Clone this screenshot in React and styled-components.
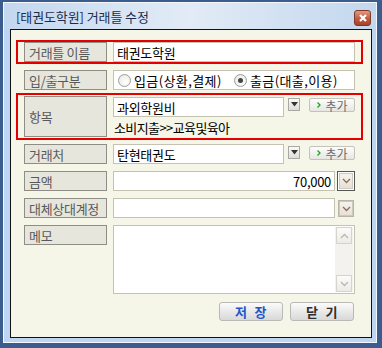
import React from 'react';
import styled, { createGlobalStyle } from 'styled-components';

const Global = createGlobalStyle`
  html, body { margin: 0; padding: 0; background: #fff; }
  body { font-family: "Noto Sans CJK KR", "Liberation Sans", sans-serif; font-size: 13px; }
  * { box-sizing: border-box; }
`;

const Outer = styled.div`
  width: 382px;
  height: 348px;
  background: #3b5c8c;
  padding: 2px 5px 5px 3px;
  display: flex;
`;

const Frame = styled.div`
  flex: 1;
  display: flex;
  flex-direction: column;
  border: 1px solid #f4f8fd;
  background: #bdd4f2;
`;

const TitleBar = styled.div`
  height: 26px;
  display: flex;
  align-items: flex-start;
  justify-content: space-between;
  padding: 0 5px 0 12px;
  background: linear-gradient(90deg, #c3d7ef 0%, #d6e4f4 30%, #e2ebf6 50%, #d2e1f2 75%, #c3d7ef 100%);
`;

const Title = styled.div`
  margin-top: 4px;
  font-size: 13px;
  color: #1c2c4c;
  letter-spacing: -0.1px;
`;

const CloseBtn = styled.div`
  margin-top: 7px;
  width: 17px;
  height: 16px;
  border: 1px solid #7d3a27;
  border-radius: 3px;
  background: linear-gradient(#e29a82, #c35a3e 55%, #a8412a);
  display: flex;
  align-items: center;
  justify-content: center;
`;

const Panel = styled.div`
  flex: 1;
  margin: 0 4px 4px 6px;
  border: 1px solid #111;
  background: #f5f6e8;
  padding: 10px 0 0 5px;
  display: flex;
  flex-direction: column;
`;

const RedBox = styled.div`
  width: 347px;
  margin-top: ${p => p.$mt || 0}px;
  border: 2px solid #e50000;
  padding: ${p => p.$pv || 0}px 6px;
  display: grid;
  grid-template-columns: 83px 242px;
  column-gap: 6px;
`;

const Row = styled.div`
  width: 347px;
  margin-top: ${p => p.$mt || 0}px;
  padding: 0 8px;
  display: grid;
  grid-template-columns: 83px 242px;
  column-gap: 6px;
  align-items: start;
`;

const Label = styled.div`
  height: ${p => p.$h || 20}px;
  border: 1px solid #8e8e86;
  background: #e6e6dd;
  color: #595959;
  padding-left: 4px;
  display: flex;
  align-items: center;
  letter-spacing: -0.3px;
  white-space: nowrap;
`;

const Field = styled.div`
  display: flex;
  align-items: flex-start;
`;

const Input = styled.div`
  width: ${p => p.$w || 242}px;
  height: ${p => p.$h || 20}px;
  margin-top: ${p => p.$mt || 0}px;
  border: 1px solid #c6c2b2;
  background: #fff;
  color: #000;
  padding: 0 3px;
  display: flex;
  align-items: center;
  justify-content: ${p => (p.$right ? 'flex-end' : 'flex-start')};
  letter-spacing: -0.3px;
`;

const Stack = styled.div`
  display: flex;
  flex-direction: column;
`;

const SubText = styled.div`
  margin-top: 3px;
  padding-left: 1px;
  color: #000;
  letter-spacing: -0.6px;
  line-height: 16px;
  white-space: nowrap;
`;

const DropBtn = styled.div`
  width: 12px;
  height: 13px;
  margin: 2px 0 0 4px;
  border: 1px solid #a9a9a4;
  background: linear-gradient(#fafafa, #dcdcd8);
  display: flex;
  align-items: center;
  justify-content: center;
`;

const AddBtn = styled.div`
  width: 46px;
  height: 14px;
  margin: 2px 0 0 9px;
  border: 1px solid #c3c3be;
  border-radius: 2px;
  background: linear-gradient(#fdfdfd, #e6e6e2);
  display: flex;
  align-items: center;
  justify-content: center;
  gap: 5px;
  font-size: 12px;
  color: #6a6a6a;
`;

const ChevBtn = styled.div`
  width: ${p => (p.$focus ? 18 : 16)}px;
  height: ${p => (p.$focus ? 20 : 17)}px;
  margin-top: ${p => (p.$focus ? 0 : 2)}px;
  margin-left: ${p => (p.$focus ? 2 : 3)}px;
  border: 1px solid ${p => (p.$focus ? '#555' : '#b8b4a8')};
  padding: ${p => (p.$focus ? 1 : 0)}px;
  background: #fff;
  display: flex;
`;

const ChevInner = styled.div`
  flex: 1;
  border: 1px solid #cfc9bd;
  background: linear-gradient(#f6f3ee, #e6e0d6);
  display: flex;
  align-items: center;
  justify-content: center;
`;

const RadioBox = styled.div`
  width: 242px;
  height: 20px;
  border: 1px solid #c6c2b2;
  background: #fff;
  padding-left: 4px;
  display: flex;
  align-items: center;
  letter-spacing: 0.4px;
  white-space: nowrap;
`;

const RadioItem = styled.div`
  display: flex;
  align-items: center;
  gap: 3px;
  width: ${p => p.$w || 'auto'};
`;

const Circle = styled.div`
  width: 13px;
  height: 13px;
  flex: none;
  border-radius: 50%;
  border: 1px solid #9c9c98;
  background: radial-gradient(circle at 60% 65%, #ffffff 0%, #e4e4e0 100%);
  display: flex;
  align-items: center;
  justify-content: center;
  &::after {
    content: '';
    display: ${p => (p.$on ? 'block' : 'none')};
    width: 5px;
    height: 5px;
    border-radius: 50%;
    background: #444;
  }
`;

const Memo = styled.div`
  width: 242px;
  height: 69px;
  border: 1px solid #c6c2b2;
  background: #fff;
  display: flex;
  justify-content: flex-end;
  padding: 1px 1px 1px 0;
`;

const ScrollBar = styled.div`
  width: 18px;
  display: flex;
  flex-direction: column;
  justify-content: space-between;
  background: #f3f2ee;
  padding: 0 1px;
`;

const ScrollArrow = styled.div`
  height: 17px;
  border: 1px solid #d6d3cb;
  background: linear-gradient(#fbfbf9, #ecebe6);
  display: flex;
  align-items: center;
  justify-content: center;
`;

const ButtonRow = styled.div`
  width: 347px;
  margin-top: 8px;
  padding-right: 9px;
  display: flex;
  justify-content: flex-end;
  gap: 7px;
`;

const Button = styled.div`
  width: 64px;
  height: 19px;
  border: 1px solid #b9b9b5;
  border-radius: 3px;
  background: linear-gradient(#fbfbfb, #e9e9e9 50%, #d9d9d9);
  color: ${p => (p.$primary ? '#1f55c8' : '#2e2e2e')};
  font-weight: bold;
  font-size: 13px;
  display: flex;
  align-items: center;
  justify-content: center;
  white-space: pre;
  letter-spacing: 0.5px;
`;

const Chevron = ({ up, color = '#8b6d55' }) => (
  <svg width="9" height="6" viewBox="0 0 9 6">
    <polyline
      points={up ? '1,5 4.5,1.5 8,5' : '1,1 4.5,4.5 8,1'}
      fill="none"
      stroke={color}
      strokeWidth="1.3"
    />
  </svg>
);

const Tri = () => (
  <svg width="7" height="5" viewBox="0 0 7 5">
    <polygon points="0,0 7,0 3.5,4.5" fill="#333" />
  </svg>
);

const GreenArrow = () => (
  <svg width="4" height="6" viewBox="0 0 4 6">
    <polyline points="0.5,0.5 3,3 0.5,5.5" fill="none" stroke="#22a020" strokeWidth="1.3" />
  </svg>
);

export default function App() {
  return (
    <>
      <Global />
      <Outer>
        <Frame>
          <TitleBar>
            <Title>[태권도학원] 거래틀 수정</Title>
            <CloseBtn>
              <svg width="8" height="8" viewBox="0 0 8 8">
                <path d="M1 1 L7 7 M7 1 L1 7" stroke="#fff" strokeWidth="2.2" />
              </svg>
            </CloseBtn>
          </TitleBar>
          <Panel>
            <RedBox>
              <Label>거래틀 이름</Label>
              <Input>태권도학원</Input>
            </RedBox>

            <Row $mt={6}>
              <Label>입/출구분</Label>
              <RadioBox>
                <RadioItem $w="116px">
                  <Circle />
                  <span>입금(상환,결제)</span>
                </RadioItem>
                <RadioItem>
                  <Circle $on />
                  <span>출금(대출,이용)</span>
                </RadioItem>
              </RadioBox>
            </Row>

            <RedBox $mt={3} $pv={1}>
              <Label $h={41}>항목</Label>
              <Stack>
                <Field>
                  <Input $w={172} $mt={1}>과외학원비</Input>
                  <DropBtn><Tri /></DropBtn>
                  <AddBtn><GreenArrow />추가</AddBtn>
                </Field>
                <SubText>소비지출&gt;&gt;교육및육아</SubText>
              </Stack>
            </RedBox>

            <Row $mt={4}>
              <Label>거래처</Label>
              <Field>
                <Input $w={172}>탄현태권도</Input>
                <DropBtn><Tri /></DropBtn>
                <AddBtn><GreenArrow />추가</AddBtn>
              </Field>
            </Row>

            <Row $mt={7}>
              <Label>금액</Label>
              <Field>
                <Input $w={222} $right>70,000</Input>
                <ChevBtn $focus><ChevInner><Chevron /></ChevInner></ChevBtn>
              </Field>
            </Row>

            <Row $mt={7}>
              <Label>대체상대계정</Label>
              <Field>
                <Input $w={222} />
                <ChevBtn><ChevInner><Chevron /></ChevInner></ChevBtn>
              </Field>
            </Row>

            <Row $mt={7}>
              <Label>메모</Label>
              <Memo>
                <ScrollBar>
                  <ScrollArrow><Chevron up color="#b8b8b4" /></ScrollArrow>
                  <ScrollArrow><Chevron color="#b8b8b4" /></ScrollArrow>
                </ScrollBar>
              </Memo>
            </Row>

            <ButtonRow>
              <Button $primary>저  장</Button>
              <Button>닫  기</Button>
            </ButtonRow>
          </Panel>
        </Frame>
      </Outer>
    </>
  );
}
